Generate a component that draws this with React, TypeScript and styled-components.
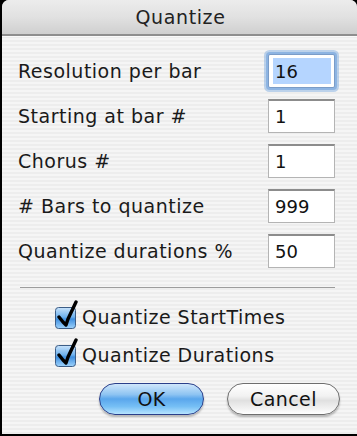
import styled, { createGlobalStyle } from 'styled-components';

const GlobalStyle = createGlobalStyle`
  html, body {
    margin: 0;
    padding: 0;
    background: #000;
  }
  body {
    font-family: "DejaVu Sans", "Liberation Sans", sans-serif;
  }
`;

const fields = [
  { label: 'Resolution per bar', value: '16', focused: true },
  { label: 'Starting at bar #', value: '1' },
  { label: 'Chorus #', value: '1' },
  { label: '# Bars to quantize', value: '999' },
  { label: 'Quantize durations %', value: '50' },
];

const options = ['Quantize StartTimes', 'Quantize Durations'];

const CheckMark = () => (
  <svg width="24" height="30" viewBox="0 0 24 30">
    <defs>
      <linearGradient id="cb" x1="0" y1="0" x2="0" y2="1">
        <stop offset="0" stopColor="#c9e3fb" />
        <stop offset="0.45" stopColor="#6fb2ee" />
        <stop offset="0.55" stopColor="#3f8fe0" />
        <stop offset="1" stopColor="#9fd3fb" />
      </linearGradient>
    </defs>
    <rect x="1.5" y="7.5" width="20" height="21" rx="3" fill="url(#cb)" stroke="#3c5d86" />
    <path
      d="M5 17 L9 22 L12 25 L14 19 L22 2"
      fill="none"
      stroke="#000"
      strokeWidth="3.4"
      strokeLinecap="round"
      strokeLinejoin="round"
    />
  </svg>
);

export default function App() {
  return (
    <>
      <GlobalStyle />
      <Frame>
        <Window>
          <TitleBar>Quantize</TitleBar>
          <Body>
            <Fields>
              {fields.map((f) => (
                <Row key={f.label}>
                  <Label>{f.label}</Label>
                  <Input focused={!!f.focused}>
                    <Value selected={!!f.focused}>{f.value}</Value>
                  </Input>
                </Row>
              ))}
            </Fields>
            <Separator />
            <Options>
              {options.map((o) => (
                <CheckRow key={o}>
                  <CheckMark />
                  <CheckLabel>{o}</CheckLabel>
                </CheckRow>
              ))}
            </Options>
            <Buttons>
              <Button primary>OK</Button>
              <Button>Cancel</Button>
            </Buttons>
          </Body>
        </Window>
      </Frame>
    </>
  );
}

const Frame = styled.div`
  width: 357px;
  height: 436px;
  background: #000;
  padding: 0 0 2px 2px;
  box-sizing: border-box;
  display: flex;
`;

const Window = styled.div`
  flex: 1;
  display: flex;
  flex-direction: column;
  border-radius: 7px 7px 0 0;
  overflow: hidden;
  background: repeating-linear-gradient(
    to bottom,
    #ededed 0px,
    #ededed 2px,
    #f5f5f5 2px,
    #f5f5f5 4px
  );
`;

const TitleBar = styled.div`
  height: 34px;
  flex-shrink: 0;
  display: flex;
  align-items: center;
  justify-content: center;
  font-size: 19px;
  color: #222;
  letter-spacing: 0.6px;
  background: linear-gradient(to bottom, #ececec 0%, #e1e1e1 50%, #cfcfcf 100%);
  border-bottom: 2px solid #8e8e8e;
  box-shadow: 0 1px 0 #fafafa;
  padding-left: 2px;
`;

const Body = styled.div`
  display: flex;
  flex-direction: column;
  padding: 18px 22px 0 16px;
`;

const Fields = styled.div`
  display: flex;
  flex-direction: column;
  gap: 11px;
`;

const Row = styled.div`
  display: flex;
  align-items: center;
  justify-content: space-between;
  height: 34px;
`;

const Label = styled.div`
  font-size: 19px;
  color: #1a1a1a;
  letter-spacing: 0.5px;
`;

const Input = styled.div<{ focused: boolean }>`
  width: 67px;
  height: 34px;
  box-sizing: border-box;
  background: #fff;
  display: flex;
  align-items: center;
  padding-left: ${(p) => (p.focused ? '4px' : '4px')};
  font-size: 18px;
  color: #111;
  border: 1px solid #b4b4b4;
  border-top: 2px solid #8c8c8c;
  ${(p) =>
    p.focused &&
    `
    border: 1px solid #7a9cc8;
    box-shadow: 0 0 0 2px #8db4e2, 0 0 0 4px rgba(141, 180, 226, 0.55);
    border-radius: 2px;
  `}
`;

const Value = styled.span<{ selected: boolean }>`
  display: flex;
  align-items: center;
  height: 26px;
  padding: 0 2px;
  width: ${(p) => (p.selected ? '54px' : 'auto')};
  background: ${(p) => (p.selected ? '#b5d5ff' : 'transparent')};
`;

const Separator = styled.div`
  height: 1px;
  background: #9c9c9c;
  margin: 19px 0 0 2px;
`;

const Options = styled.div`
  display: flex;
  flex-direction: column;
  gap: 8px;
  margin-top: 12px;
  padding-left: 36px;
`;

const CheckRow = styled.div`
  display: flex;
  align-items: flex-end;
  height: 30px;
  gap: 4px;
`;

const CheckLabel = styled.span`
  font-size: 19px;
  color: #1a1a1a;
  letter-spacing: 0.5px;
  padding-bottom: 2px;
`;

const Buttons = styled.div`
  display: flex;
  justify-content: flex-end;
  gap: 23px;
  margin: 15px -5px 0 0;
`;

const Button = styled.button<{ primary?: boolean }>`
  height: 32px;
  width: ${(p) => (p.primary ? '105px' : '113px')};
  border-radius: 16px;
  font-family: inherit;
  font-size: 19px;
  color: #111;
  padding: 0;
  letter-spacing: 0.4px;
  border: 1px solid ${(p) => (p.primary ? '#2a3f8a' : '#6e6e6e')};
  background: ${(p) =>
    p.primary
      ? 'linear-gradient(to bottom, #cfe6fb 0%, #8ec4f2 35%, #5aa6ec 50%, #76bff5 75%, #b6e4ff 100%)'
      : 'linear-gradient(to bottom, #ffffff 0%, #f2f2f2 40%, #e0e0e0 55%, #f4f4f4 85%, #ffffff 100%)'};
  box-shadow: 0 2px 2px rgba(0, 0, 0, 0.25);
`;
